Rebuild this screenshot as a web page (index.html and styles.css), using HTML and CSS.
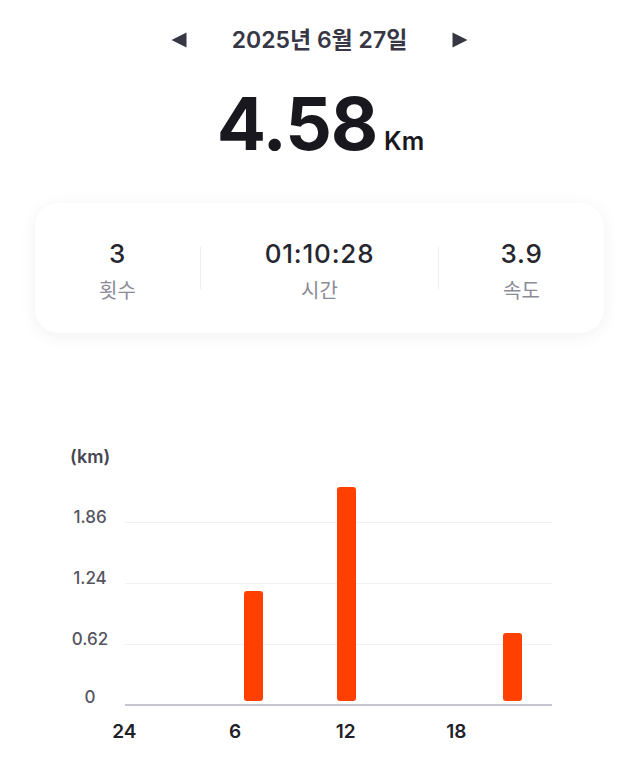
FILE: index.html
```html
<!DOCTYPE html>
<html lang="ko">
<head>
    <meta charset="UTF-8">
    <meta name="viewport" content="width=device-width, initial-scale=1.0">
    <title>일별 기록</title>
    <link rel="stylesheet" href="styles.css">
</head>
<body>
    <div class="page">
        <div class="date-nav">
            <span class="nav-btn" role="button" aria-label="이전">
                <svg width="16" height="16" viewBox="0 0 16 16"><polygon points="15.5,0.5 15.5,15.5 0.5,8" /></svg>
            </span>
            <span class="date-text">2025년 6월 27일</span>
            <span class="nav-btn" role="button" aria-label="다음">
                <svg width="16" height="16" viewBox="0 0 16 16"><polygon points="0.5,0.5 0.5,15.5 15.5,8" /></svg>
            </span>
        </div>

        <div class="distance">
            <span class="distance-value">4.58</span>
            <span class="distance-unit">Km</span>
        </div>

        <div class="stats-card">
            <div class="stat side">
                <div class="stat-value">3</div>
                <div class="stat-label">횟수</div>
            </div>
            <div class="divider"></div>
            <div class="stat middle">
                <div class="stat-value">01:10:28</div>
                <div class="stat-label">시간</div>
            </div>
            <div class="divider"></div>
            <div class="stat side">
                <div class="stat-value">3.9</div>
                <div class="stat-label">속도</div>
            </div>
        </div>

        <div class="chart">
            <div class="chart-unit">(km)</div>
            <div class="chart-body">
                <div class="chart-row first">
                    <span class="y-label">1.86</span>
                    <div class="grid-line"></div>
                </div>
                <div class="chart-row">
                    <span class="y-label">1.24</span>
                    <div class="grid-line"></div>
                </div>
                <div class="chart-row">
                    <span class="y-label">0.62</span>
                    <div class="grid-line"></div>
                </div>
                <div class="chart-row last">
                    <span class="y-label">0</span>
                    <div class="grid-line base"></div>
                </div>

                <!-- 시간대별 거리 막대 -->
                <div class="bars">
                    <div class="bar" style="left: 119px; height: 110px;"></div>
                    <div class="bar" style="left: 212px; height: 214px;"></div>
                    <div class="bar" style="left: 378px; height: 68px;"></div>
                </div>
            </div>
            <div class="x-axis">
                <span>24</span>
                <span>6</span>
                <span>12</span>
                <span>18</span>
            </div>
        </div>
    </div>
</body>
</html>
```

FILE: styles.css
```css
* {
    margin: 0;
    padding: 0;
    box-sizing: border-box;
}

body {
    font-family: Inter, "Noto Sans CJK KR", sans-serif;
    background: #fff;
    color: #1c1c24;
    width: 640px;
    height: 774px;
    overflow: hidden;
}

.page {
    padding: 0 36px 0 35px;
}

/* 날짜 선택 */
.date-nav {
    display: flex;
    justify-content: center;
    align-items: center;
    gap: 45px;
    padding-top: 22px;
    height: 58px;
}

.nav-btn {
    display: block;
    width: 16px;
    height: 16px;
    cursor: pointer;
}

.nav-btn svg {
    display: block;
    fill: #363645;
}

.date-text {
    font-size: 23px;
    font-weight: 600;
    line-height: 36px;
    color: #363645;
}

/* 총 거리 */
.distance {
    display: flex;
    justify-content: center;
    align-items: baseline;
    gap: 7px;
    margin-top: 29px;
    padding-left: 2px;
}

.distance-value {
    font-size: 73px;
    font-weight: 700;
    line-height: 73px;
    letter-spacing: -1.2px;
    color: #18181e;
}

.distance-unit {
    font-size: 25px;
    font-weight: 600;
    color: #18181e;
}

/* 요약 카드 */
.stats-card {
    display: flex;
    align-items: center;
    margin-top: 43px;
    height: 130px;
    padding-top: 6px;
    background: #fff;
    border-radius: 24px;
    box-shadow: 0 3px 18px rgba(0, 0, 0, 0.06);
}

.stat {
    display: flex;
    flex-direction: column;
    align-items: center;
    gap: 9px;
}

.stat.side {
    width: 165px;
}

.stat.middle {
    flex: 1;
}

.stat-value {
    font-size: 26px;
    font-weight: 500;
    line-height: 30px;
    letter-spacing: 0.8px;
    color: #26262f;
}

.stat-label {
    font-size: 20px;
    line-height: 26px;
    color: #8b8b97;
}

.divider {
    width: 1px;
    height: 42px;
    margin-top: -6px;
    background: #eeeef0;
}

/* 시간대별 차트 */
.chart {
    margin-top: 114px;
    margin-left: 35px;
    width: 482px;
}

.chart-unit {
    font-size: 18px;
    font-weight: 600;
    line-height: 20px;
    color: #464651;
}

.chart-body {
    position: relative;
}

.chart-row {
    display: grid;
    grid-template-columns: 40px 1fr;
    column-gap: 15px;
    align-items: end;
    height: 61px;
}

.chart-row.first {
    height: 56px;
}

.y-label {
    font-size: 17px;
    font-weight: 500;
    line-height: 20px;
    text-align: center;
    color: #55555f;
    margin-bottom: -4px;
}

.chart-row.last .y-label {
    margin-bottom: -1px;
}

.grid-line {
    height: 100%;
    border-bottom: 1px solid #f1f1f3;
}

.grid-line.base {
    border-bottom: 2px solid #c6c6d0;
}

.bars {
    position: absolute;
    left: 55px;
    right: 0;
    top: 0;
    bottom: 0;
}

.bar {
    position: absolute;
    bottom: 5px;
    width: 19px;
    background: #ff4000;
    border-radius: 3px;
}

.x-axis {
    display: grid;
    grid-template-columns: repeat(4, 110.7px);
    margin-left: -1px;
    margin-top: 14px;
}

.x-axis span {
    text-align: center;
    font-size: 19px;
    font-weight: 600;
    line-height: 24px;
    color: #202028;
}
```
